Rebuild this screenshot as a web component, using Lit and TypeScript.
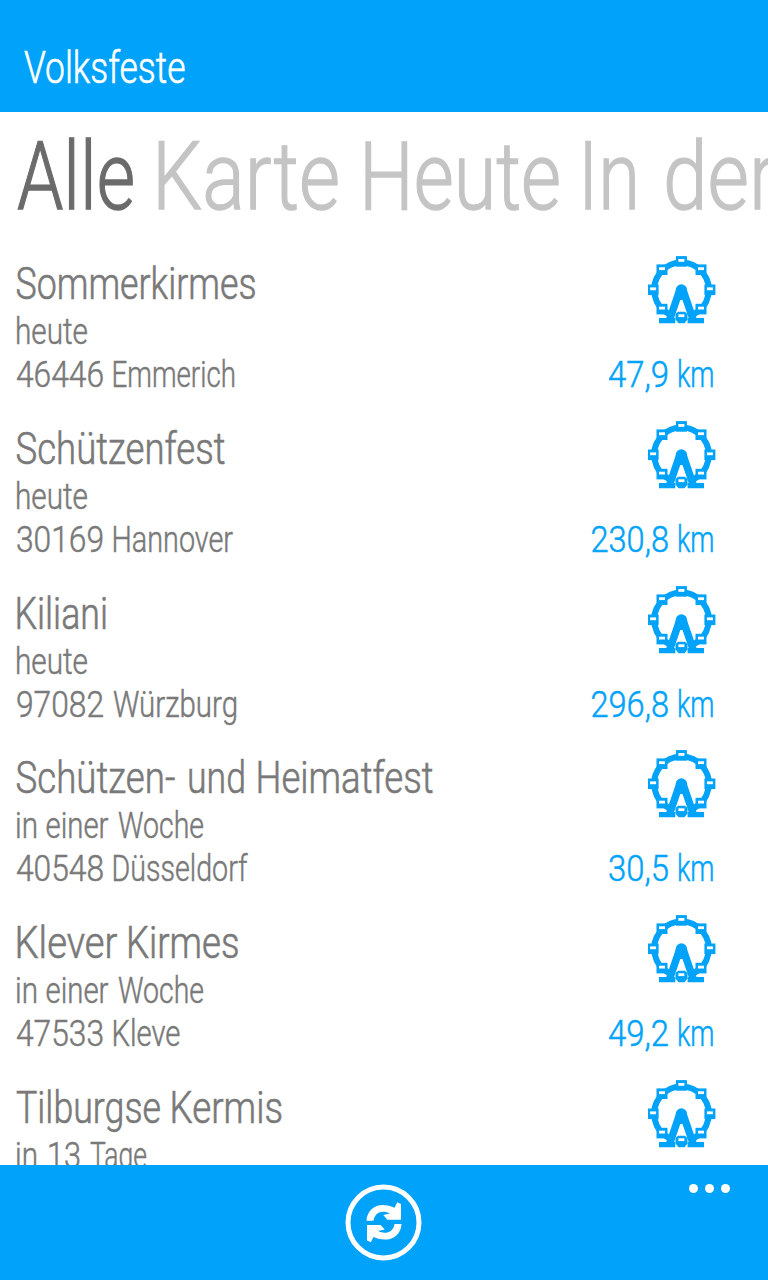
import { LitElement, html, svg, css } from "lit";
import { customElement, property } from "lit/decorators.js";

// A word with the left edge and width it occupies on its line.
type Word = [text: string, x: number, width: number];
interface Fest { name: Word[]; when: Word[]; place: Word[]; distance: Word[]; }

const km: Word = ["km", 94, 37.5];
const today: Word[] = [["heute", 15, 73]];
const inAWeek: Word[] = [["in", 15, 23], ["einer", 45.5, 63], ["Woche", 118, 86]];
const fests: Fest[] = [
  { name: [["Sommerkirmes", 15.5, 241]], when: today, place: [["46446", 16, 88], ["Emmerich", 111.5, 124.5]], distance: [["47,9", 25, 61], km] },
  { name: [["Schützenfest", 15.5, 210]], when: today, place: [["30169", 16, 88], ["Hannover", 111.5, 121.5]], distance: [["230,8", 7.5, 78.5], km] },
  { name: [["Kiliani", 14.5, 93.5]], when: today, place: [["97082", 16, 88], ["Würzburg", 113, 125]], distance: [["296,8", 7.5, 78.5], km] },
  { name: [["Schützen-", 15.5, 160], ["und", 187, 59], ["Heimatfest", 255.5, 178]], when: inAWeek, place: [["40548", 16, 88], ["Düsseldorf", 111.5, 136]], distance: [["30,5", 25, 61], km] },
  { name: [["Klever", 14.5, 103], ["Kirmes", 126, 113.5]], when: inAWeek, place: [["47533", 16, 88], ["Kleve", 111.5, 69]], distance: [["49,2", 25, 61], km] },
  { name: [["Tilburgse", 16, 145], ["Kermis", 169.5, 113.5]], when: [["in", 15, 23], ["13", 47, 34], ["Tage", 90, 57]], place: [], distance: [] },
];

@customElement("fit-line")
export class FitLine extends LitElement {
  @property({ attribute: false }) words: Word[] = [];
  @property({ type: Number }) baseline = 34;
  static styles = css`
    :host { display: block; }
    svg { display: block; width: 100%; height: 100%; overflow: visible; }
    text { fill: currentColor; stroke: currentColor; stroke-width: 0.014em; font-family: Roboto, "Liberation Sans", sans-serif; font-weight: 300; }
  `;
  render() {
    return html`<svg>${this.words.map(([t, x, w]) => svg`<text x=${x} y=${this.baseline} textLength=${w} lengthAdjust="spacingAndGlyphs">${t}</text>`)}</svg>`;
  }
}

@customElement("ferris-wheel")
export class FerrisWheel extends LitElement {
  static styles = css`
    :host { display: block; width: 68px; height: 68px; }
    svg { display: block; }
    .ring { fill: none; stroke: #00a3f9; stroke-width: 6; }
    .leg { fill: none; stroke: #00a3f9; stroke-width: 7.4; }
    .solid { fill: #00a3f9; }
    .window { fill: #fff; }
  `;
  render() {
    // Centres of the cabin windows around the rim.
    const cabins = [[33.4, 4.3], [14, 12.6], [53, 12.6], [5.1, 32.7], [61.9, 32.7], [14, 52], [53, 52]];
    return html`<svg width="68" height="68" viewBox="0 0 68 68">
      <path class="ring" d="M21 58A27.3 27.3 0 1 1 46 58"></path>
      <path class="leg" d="M31.800 34L21.500 64M35 34L45.300 64"></path>
      <path class="solid" d="M27.700 38V34A5.700 5.700 0 0 1 39.100 34V38L36 44H31Z"></path>
      <path class="solid" d="M11 62H27.300V67.200H11ZM39.600 62H56V67.200H39.600Z"></path>
      <path class="solid" d="M27.500 58L30 55.700H37L39.500 58V63.500L36.500 67.200H30.500L27.500 63.500Z"></path>
      <rect class="window" x="30.400" y="58.300" width="6" height="2.800"></rect>
      ${cabins.map(([x, y]) => svg`<rect class="solid" x=${x - 5.5} y=${y - 4.2} width="11" height="10.600"></rect>
        <rect class="window" x=${x - 3} y=${y - 1.3} width="6" height="2.800"></rect>`)}
    </svg>`;
  }
}

@customElement("app-root")
export class AppRoot extends LitElement {
  static styles = css`
    :host { display: flex; flex-direction: column; width: 768px; height: 1280px; overflow: hidden; background: #fff; color: #797979; }
    header { height: 112px; flex: none; background: #00a3f9; color: #fff; }
    .title { height: 112px; font-size: 44.5px; }
    .pivot { display: flex; flex: none; height: 138px; color: #c4c4c4; font-size: 94px; }
    .active { width: 145px; color: #6b6b6b; }
    .rest { flex: 1; }
    main { flex: 1; min-height: 0; overflow: hidden; }
    .row { display: grid; grid-template-columns: 583px 133px; grid-template-rows: 60px 43px 43px; height: 164.8px; }
    .name { font-size: 44.5px; }
    .when, .place, .distance { font-size: 36px; }
    .distance { color: #00a3f9; }
    .wheel { grid-column: 2; grid-row: 1 / 3; padding: 6px 0 0 65px; }
    .when, .place { grid-column: 1; }
    .distance { grid-column: 2; grid-row: 3; }
    footer { flex: none; height: 115px; display: grid; grid-template-columns: 1fr 78px 1fr; background: #00a3f9; }
    .refresh { grid-column: 2; padding-top: 19px; }
    .refresh svg { display: block; }
    .dots { display: flex; gap: 7px; justify-content: flex-end; padding: 19px 38px 0 0; }
    .dots i { width: 9px; height: 9px; border-radius: 50%; background: #fff; }
  `;
  render() {
    const arrow = "M21.500 36.700C22 27 29 21 38 21Q44.500 21 49.500 23.700L52.200 18.300L56 20V35.700H42.300L38.300 31L45 29.500C37 25.500 29.500 29 28.500 36.700Z";
    return html`
      <header><fit-line class="title" .baseline=${83} .words=${[["Volksfeste", 24, 161.5]]}></fit-line></header>
      <nav class="pivot">
        <fit-line class="active" .baseline=${97} .words=${[["Alle", 17, 118]]}></fit-line>
        <fit-line class="rest" .baseline=${97} .words=${[["Karte", 7, 188], ["Heute", 214, 202], ["In", 433, 62], ["der", 518, 113]]}></fit-line>
      </nav>
      <main>${fests.map((f) => html`<section class="row">
        <fit-line class="name" .baseline=${49} .words=${f.name}></fit-line>
        <div class="wheel"><ferris-wheel></ferris-wheel></div>
        <fit-line class="when" .words=${f.when}></fit-line>
        <fit-line class="place" .words=${f.place}></fit-line>
        <fit-line class="distance" .words=${f.distance}></fit-line>
      </section>`)}</main>
      <footer>
        <div class="refresh"><svg width="78" height="78" viewBox="0 0 78 78">
          <circle cx="38.5" cy="38.5" r="35.5" fill="none" stroke="#fff" stroke-width="5"></circle>
          <path fill="#fff" d=${arrow}></path>
          <path fill="#fff" d=${arrow} transform="rotate(180 39 38.300)"></path>
        </svg></div>
        <div class="dots"><i></i><i></i><i></i></div>
      </footer>`;
  }
}
